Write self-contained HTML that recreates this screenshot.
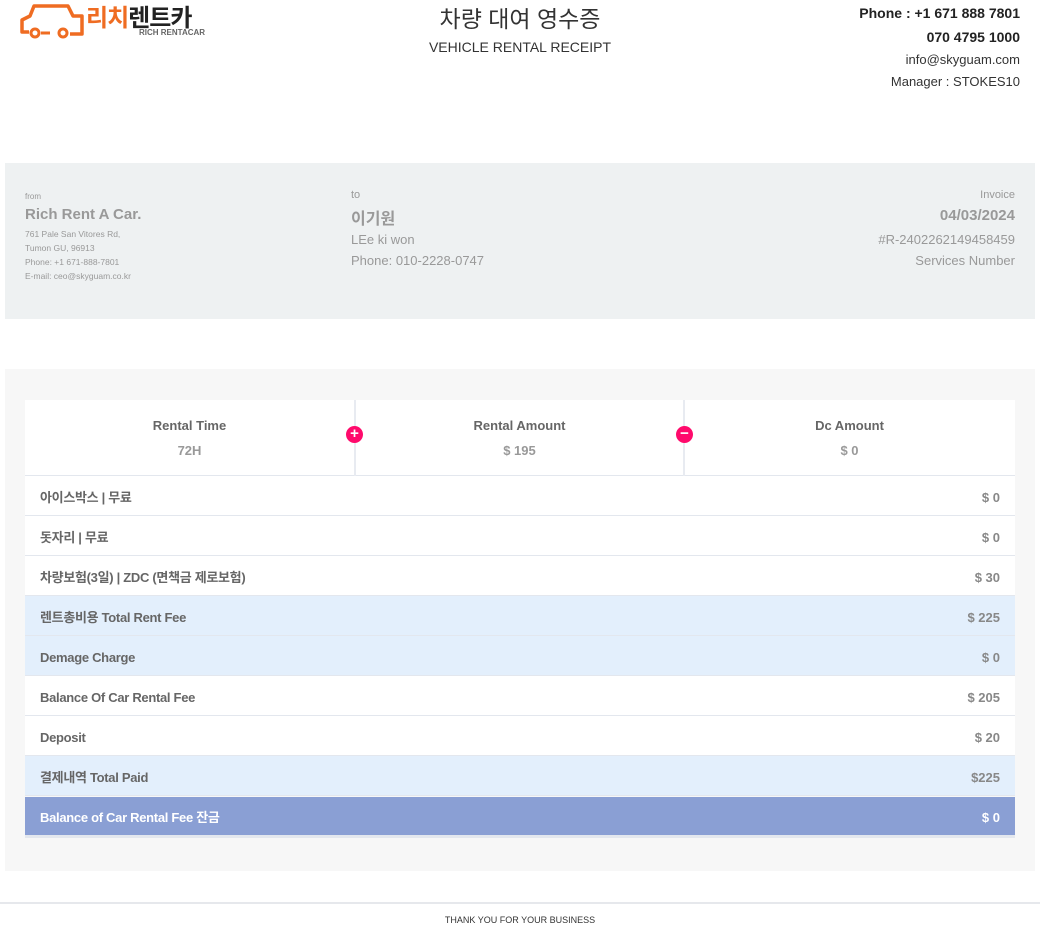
<!DOCTYPE html>
<html><head><meta charset="utf-8"><style>
body{margin:0;width:1040px;height:929px;background:#fff;font-family:"Liberation Sans","Noto Sans CJK KR",sans-serif;position:relative;overflow:hidden;color:#555}
.a{position:absolute}
.row{position:absolute;left:25px;width:990px;height:39px;border-bottom:1px solid #e3e7ee;font-size:13px;font-weight:bold;color:#666;line-height:43px}
.row .l{position:absolute;left:15px;letter-spacing:-0.3px}
.row .r{position:absolute;right:15px;color:#888}
.blue{background:#e3effc}
.cell{position:absolute;top:400px;height:76px;width:329px;text-align:center;font-size:13px;font-weight:bold;color:#666}
.circ{position:absolute;width:17px;height:17px;border-radius:50%;background:#ff0a6c;color:#fff;font-weight:bold;text-align:center;line-height:16px;font-size:15px}
</style></head><body>
<svg class="a" style="left:18px;top:2px" width="70" height="38" viewBox="0 0 70 38"><path d="M11 30 H4 V18 L12 14 L16 4 H50 L55 14 H64 V32 H52" fill="none" stroke="#ef6c22" stroke-width="3.5" stroke-linejoin="round"/><circle cx="17" cy="31" r="4" fill="#fff" stroke="#ef6c22" stroke-width="3"/><circle cx="45" cy="31" r="4" fill="#fff" stroke="#ef6c22" stroke-width="3"/><path d="M23 31H32" stroke="#ef6c22" stroke-width="3"/></svg>
<div class="a" style="left:86px;top:-2px;font-size:24px;font-weight:bold;letter-spacing:-1px"><span style="color:#ef6c22">리치</span><span style="color:#222">렌트카</span></div>
<div class="a" style="left:139px;top:28px;font-size:8px;color:#666;font-weight:bold">RICH RENTACAR</div>
<div class="a" style="left:0;width:1040px;top:0;text-align:center;font-size:23px;color:#333">차량 대여 영수증</div>
<div class="a" style="left:0;width:1040px;top:39px;text-align:center;font-size:14px;color:#333">VEHICLE RENTAL RECEIPT</div>
<div class="a" style="right:20px;top:1px;text-align:right;color:#222;font-size:14px;line-height:24px;font-weight:bold">Phone : +1 671 888 7801<br>070 4795 1000</div>
<div class="a" style="right:20px;top:49px;text-align:right;color:#333;font-size:13px;line-height:22px">info@skyguam.com<br>Manager : STOKES10</div>

<div class="a" style="left:5px;top:163px;width:1030px;height:156px;background:#eef1f2"></div>
<div class="a" style="left:25px;top:192px;font-size:8px;color:#999">from</div>
<div class="a" style="left:25px;top:206px;font-size:15px;font-weight:bold;color:#999">Rich Rent A Car.</div>
<div class="a" style="left:25px;top:227px;font-size:8.5px;color:#999;line-height:14px">761 Pale San Vitores Rd,<br>Tumon GU, 96913<br>Phone: +1 671-888-7801<br>E-mail: ceo@skyguam.co.kr</div>
<div class="a" style="left:351px;top:189px;font-size:11px;color:#999">to</div>
<div class="a" style="left:351px;top:205px;font-size:16px;font-weight:bold;color:#999">이기원</div>
<div class="a" style="left:351px;top:229px;font-size:13px;color:#999;line-height:21px">LEe ki won<br>Phone: 010-2228-0747</div>
<div class="a" style="right:25px;top:189px;text-align:right;font-size:11px;color:#999">Invoice</div>
<div class="a" style="right:25px;top:207px;text-align:right;font-size:15px;font-weight:bold;color:#999">04/03/2024</div>
<div class="a" style="right:25px;top:229px;text-align:right;font-size:13px;color:#999;line-height:21px">#R-2402262149458459<br>Services Number</div>

<div class="a" style="left:5px;top:369px;width:1030px;height:502px;background:#f7f7f7"></div>
<div class="a" style="left:25px;top:400px;width:990px;height:75px;background:#fff;border-bottom:1px solid #e3e7ee"></div>
<div class="cell" style="left:25px"><div style="margin-top:18px">Rental Time</div><div style="margin-top:10px;color:#999">72H</div></div>
<div class="a" style="left:354px;top:400px;width:2px;height:76px;background:#e8ebf1"></div>
<div class="cell" style="left:355px"><div style="margin-top:18px">Rental Amount</div><div style="margin-top:10px;color:#999">$ 195</div></div>
<div class="a" style="left:683px;top:400px;width:2px;height:76px;background:#e8ebf1"></div>
<div class="cell" style="left:685px"><div style="margin-top:18px">Dc Amount</div><div style="margin-top:10px;color:#999">$ 0</div></div>
<div class="circ" style="left:346px;top:426px">+</div>
<div class="circ" style="left:676px;top:426px">−</div>

<div class="row" style="top:476px;background:#fff"><span class="l">아이스박스 | 무료</span><span class="r">$ 0</span></div>
<div class="row" style="top:516px;background:#fff"><span class="l">돗자리 | 무료</span><span class="r">$ 0</span></div>
<div class="row" style="top:556px;background:#fff"><span class="l">차량보험(3일) | ZDC (면책금 제로보험)</span><span class="r">$ 30</span></div>
<div class="row blue" style="top:596px"><span class="l">렌트총비용 Total Rent Fee</span><span class="r">$ 225</span></div>
<div class="row blue" style="top:636px"><span class="l">Demage Charge</span><span class="r">$ 0</span></div>
<div class="row" style="top:676px;background:#fff"><span class="l">Balance Of Car Rental Fee</span><span class="r">$ 205</span></div>
<div class="row" style="top:716px;background:#fff"><span class="l">Deposit</span><span class="r">$ 20</span></div>
<div class="row blue" style="top:756px"><span class="l">결제내역 Total Paid</span><span class="r">$225</span></div>
<div class="row" style="top:797px;background:#8a9fd4;color:#fff;height:38px;line-height:42px;border-bottom:3px solid #e3e7ee"><span class="l">Balance of Car Rental Fee 잔금</span><span class="r" style="color:#fff">$ 0</span></div>

<div class="a" style="left:0;top:902px;width:1040px;height:2px;background:#e6e8ec"></div>
<div class="a" style="left:0;width:1040px;top:915px;text-align:center;font-size:9px;color:#333">THANK YOU FOR YOUR BUSINESS</div>
</body></html>
